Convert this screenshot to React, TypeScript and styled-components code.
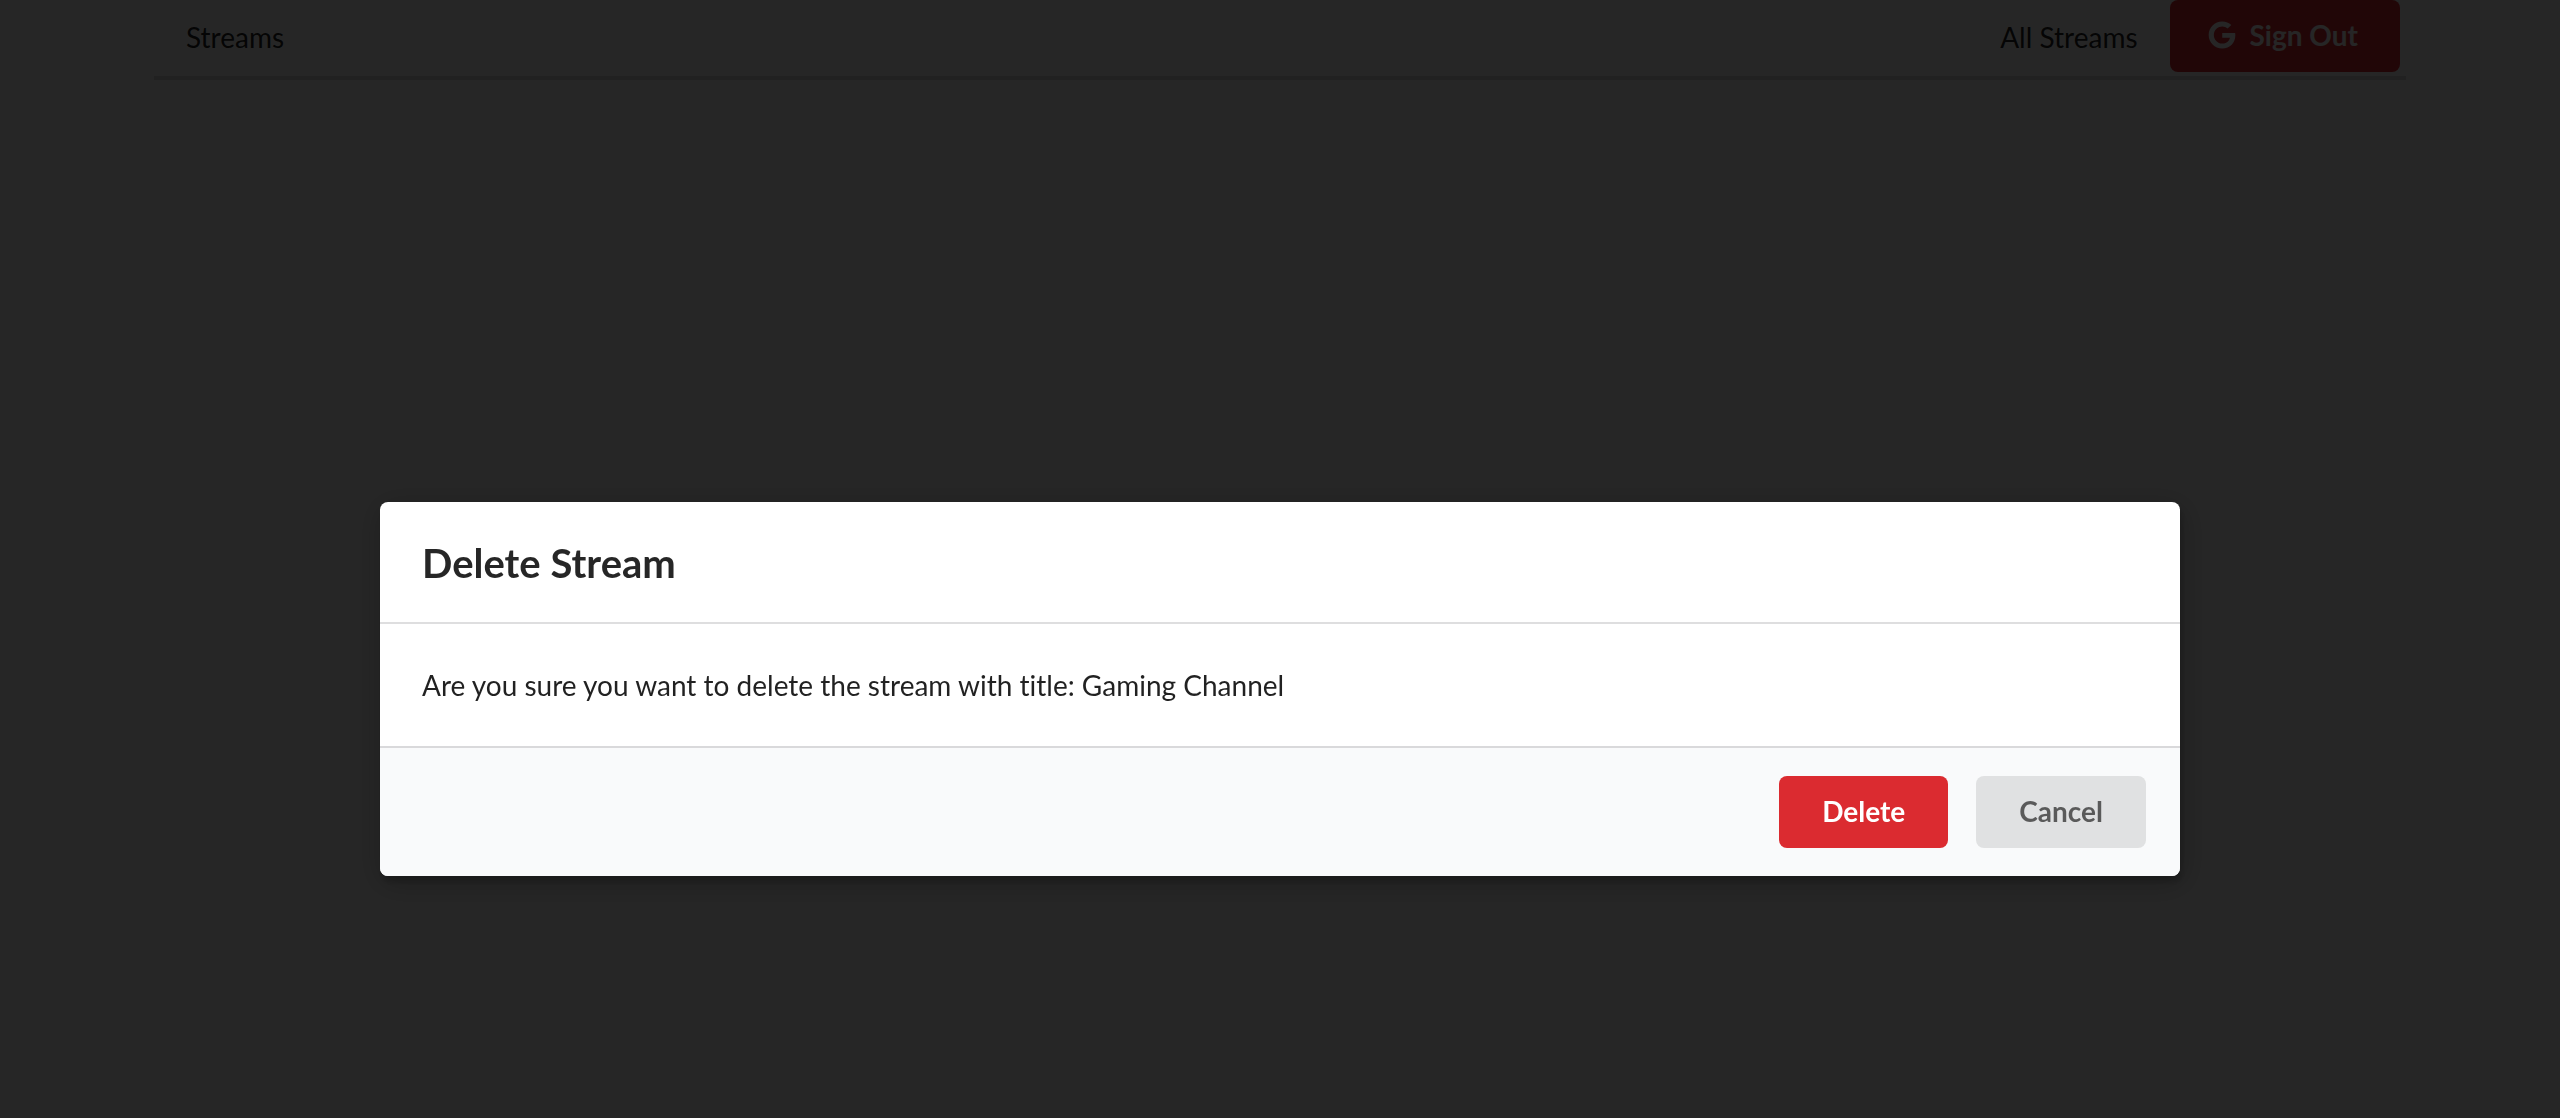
import React from "react";
import styled, { createGlobalStyle } from "styled-components";
import { FaGoogle } from "react-icons/fa";

const GlobalStyle = createGlobalStyle`
  *, *::before, *::after { box-sizing: border-box; }
  body {
    margin: 0;
    background: #fff;
    color: rgba(0, 0, 0, 0.87);
    font-family: Lato, "Liberation Sans", Arial, sans-serif;
    font-size: 28px;
    font-variant-ligatures: none;
    line-height: 40px;
  }
`;

const Container = styled.div`
  max-width: 2252px;
  margin: 0 auto;
`;

const Menu = styled.nav`
  display: flex;
  align-items: flex-start;
  justify-content: space-between;
  height: 80px;
  padding-right: 6px;
  border-bottom: 4px solid rgba(34, 36, 38, 0.15);
`;

const MenuGroup = styled.div`
  display: flex;
`;

const MenuItem = styled.a`
  padding: 17px 32px;
  color: rgba(0, 0, 0, 0.87);
  text-decoration: none;
`;

const tones = {
  red: { background: "#db2b30", hover: "#d01919", color: "#fff" },
  neutral: { background: "#e0e1e2", hover: "#cacbcd", color: "rgba(0, 0, 0, 0.6)" },
};

const Button = styled.button<{ $tone: keyof typeof tones }>`
  display: inline-flex;
  align-items: center;
  gap: 14px;
  height: 72px;
  padding: 0 43px 2px;
  border: 0;
  border-radius: 8px;
  background: ${({ $tone }) => tones[$tone].background};
  color: ${({ $tone }) => tones[$tone].color};
  font: inherit;
  font-weight: 700;
  cursor: pointer;

  &:hover {
    background: ${({ $tone }) => tones[$tone].hover};
  }
`;

const SignOutButton = styled(Button)`
  padding: 0 42px 2px 38px;
`;

const Dimmer = styled.div`
  position: fixed;
  inset: 0;
  display: flex;
  align-items: center;
  justify-content: center;
  padding-top: 260px;
  background: rgba(0, 0, 0, 0.85);
`;

const Modal = styled.section`
  width: 1800px;
  max-width: 95%;
  overflow: hidden;
  border-radius: 8px;
  background: #fff;
  box-shadow: 2px 6px 6px 0 rgba(0, 0, 0, 0.2), 2px 6px 30px 4px rgba(0, 0, 0, 0.2);
`;

const ModalTitle = styled.h1`
  margin: 0;
  padding: 35px 42px 33px;
  border-bottom: 2px solid rgba(34, 36, 38, 0.15);
  color: rgba(0, 0, 0, 0.85);
  font-size: 40px;
  line-height: 52px;
`;

const ModalContent = styled.p`
  margin: 0;
  padding: 41px 42px;
`;

const ModalActions = styled.footer`
  display: flex;
  justify-content: flex-end;
  gap: 28px;
  padding: 28px 34px;
  border-top: 2px solid rgba(34, 36, 38, 0.15);
  background: #f9fafb;
`;

export default function App() {
  return (
    <>
      <GlobalStyle />
      <Container>
        <Menu>
          <MenuItem href="#streams">Streams</MenuItem>
          <MenuGroup>
            <MenuItem href="#all">All Streams</MenuItem>
            <SignOutButton $tone="red" type="button">
              <FaGoogle aria-hidden="true" />
              Sign Out
            </SignOutButton>
          </MenuGroup>
        </Menu>
      </Container>
      <Dimmer>
        <Modal role="dialog" aria-modal="true" aria-labelledby="modal-title">
          <ModalTitle id="modal-title">Delete Stream</ModalTitle>
          <ModalContent>
            Are you sure you want to delete the stream with title: Gaming Channel
          </ModalContent>
          <ModalActions>
            <Button $tone="red" type="button">Delete</Button>
            <Button $tone="neutral" type="button">Cancel</Button>
          </ModalActions>
        </Modal>
      </Dimmer>
    </>
  );
}
